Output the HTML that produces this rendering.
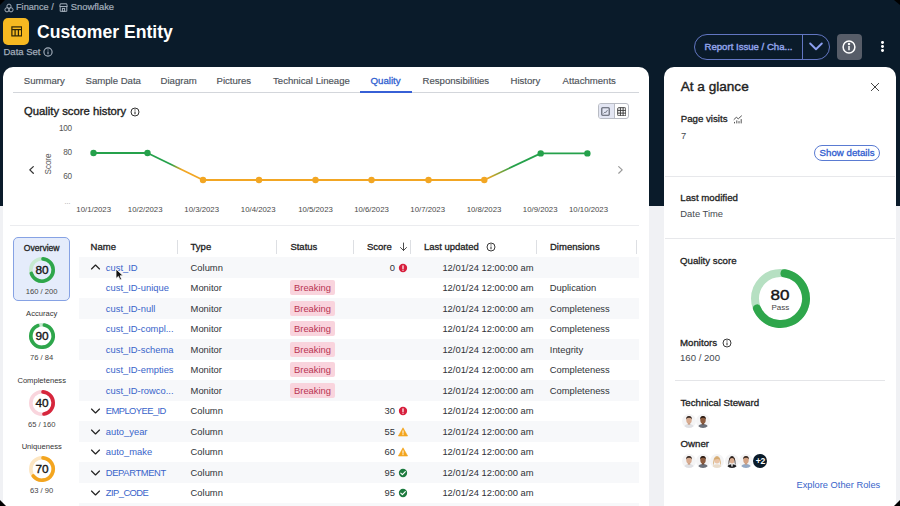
<!DOCTYPE html>
<html><head><meta charset="utf-8">
<style>
*{box-sizing:border-box;margin:0;padding:0}
html,body{width:900px;height:506px;overflow:hidden;background:#f0f1f4;font-family:"Liberation Sans",sans-serif;position:relative}
.t{position:absolute;white-space:nowrap;line-height:20px;height:20px}
.abs{position:absolute}
#hdr{position:absolute;left:0;top:0;width:900px;height:205.6px;background:#0a1b2a}
.card{position:absolute;background:#fff;border-radius:10px 10px 0 0}
.hd{font-size:9.5px;color:#222;-webkit-text-stroke:0.3px #222}
.bd{font-size:9.4px;color:#303338}
.lnk{font-size:9.4px;color:#3864ca}
.lbl{font-size:9.7px;color:#222;-webkit-text-stroke:0.3px #222}
.gry{font-size:9.4px;color:#45494f}
.tab{font-size:9.5px;color:#50555c;top:71px}
</style></head><body>
<div id="hdr"></div>

<!-- breadcrumb -->
<svg class="abs" style="left:3.5px;top:2.5px" width="10" height="10" viewBox="0 0 10 10" fill="none" stroke="#a3aebb" stroke-width="1">
  <circle cx="5" cy="3.2" r="2.1"/><circle cx="3" cy="6.8" r="2.1"/><circle cx="7" cy="6.8" r="2.1"/>
</svg>
<div class="t" style="left:16px;top:-3px;font-size:9.2px;color:#a3aebb;-webkit-text-stroke:0.2px #a3aebb">Finance /</div>
<svg class="abs" style="left:58.5px;top:3px" width="9" height="9" viewBox="0 0 9 9" fill="none" stroke="#a3aebb" stroke-width="1">
  <path d="M1.2 8.3 V3.6 M7.8 3.6 V8.3 H1.2"/><path d="M0.7 3.5 L1.3 0.8 H7.7 L8.3 3.5 Z"/><rect x="3.4" y="5.4" width="2.2" height="2.9"/>
</svg>
<div class="t" style="left:70.8px;top:-3px;font-size:9.4px;color:#a3aebb;-webkit-text-stroke:0.2px #a3aebb">Snowflake</div>

<!-- title -->
<div class="abs" style="left:3.2px;top:18.4px;width:25.8px;height:26.2px;background:#f6b921;border-radius:5px"></div>
<svg class="abs" style="left:10.5px;top:26px" width="11.5" height="11" viewBox="0 0 11.5 11" fill="none" stroke="#2b2408" stroke-width="1.2">
  <rect x="0.9" y="0.9" width="9.7" height="9"/><line x1="0.9" y1="3.6" x2="10.6" y2="3.6"/><line x1="4.1" y1="3.6" x2="4.1" y2="9.9"/><line x1="7.4" y1="3.6" x2="7.4" y2="9.9"/>
</svg>
<div class="t" style="left:37px;top:21.7px;font-size:17.6px;font-weight:700;color:#fff">Customer Entity</div>
<div class="t" style="left:3.5px;top:42px;font-size:9.5px;color:#a3aebb;-webkit-text-stroke:0.25px #a3aebb">Data Set</div>
<svg class="abs" style="left:43px;top:47px" width="10" height="10" viewBox="0 0 10 10" fill="none" stroke="#a3aebb" stroke-width="1.15">
  <circle cx="5" cy="5" r="4.1"/><line x1="5" y1="4.6" x2="5" y2="7.2"/><circle cx="5" cy="2.9" r="0.6" fill="#a3aebb" stroke="none"/>
</svg>

<!-- header right -->
<div class="abs" style="left:694px;top:34px;width:135.5px;height:25.5px;border:1px solid #6276c2;border-radius:13px"></div>
<div class="abs" style="left:802.2px;top:34.5px;width:1px;height:24.5px;background:#6276c2"></div>
<div class="t" style="left:704.5px;top:37px;font-size:9.6px;color:#93a5ec;-webkit-text-stroke:0.4px #93a5ec">Report Issue / Cha...</div>
<svg class="abs" style="left:809px;top:42px" width="14" height="9" viewBox="0 0 14 9" fill="none" stroke="#8c9ff0" stroke-width="1.9" stroke-linecap="round" stroke-linejoin="round">
  <polyline points="1.2,1.5 7,7.2 12.8,1.5"/>
</svg>
<div class="abs" style="left:836.5px;top:34px;width:25.5px;height:26px;background:#575d68;border-radius:4px"></div>
<svg class="abs" style="left:842.3px;top:39.7px" width="14" height="14" viewBox="0 0 14 14" fill="none" stroke="#fff" stroke-width="1.5">
  <circle cx="7" cy="7" r="5.9"/><line x1="7" y1="6" x2="7" y2="10.2"/><circle cx="7" cy="4" r="0.5" fill="#fff"/>
</svg>
<div class="abs" style="left:881.2px;top:41px;width:2.8px;height:2.8px;border-radius:50%;background:#fff"></div>
<div class="abs" style="left:881.2px;top:45.2px;width:2.8px;height:2.8px;border-radius:50%;background:#fff"></div>
<div class="abs" style="left:881.2px;top:49.3px;width:2.8px;height:2.8px;border-radius:50%;background:#fff"></div>

<!-- cards -->
<div class="card" style="left:3px;top:67.2px;width:646px;height:450px"></div>
<div class="card" style="left:664.2px;top:67.2px;width:231.5px;height:450px"></div>


<div class="t " style="left:23.8px;top:71.00px;font-size:9.6px;color:#4d5259;-webkit-text-stroke:0.15px #4d5259">Summary</div>
<div class="t " style="left:85.5px;top:71.00px;font-size:9.6px;color:#4d5259;-webkit-text-stroke:0.15px #4d5259">Sample Data</div>
<div class="t " style="left:160.5px;top:71.00px;font-size:9.6px;color:#4d5259;-webkit-text-stroke:0.15px #4d5259">Diagram</div>
<div class="t " style="left:216.5px;top:71.00px;font-size:9.6px;color:#4d5259;-webkit-text-stroke:0.15px #4d5259">Pictures</div>
<div class="t " style="left:273px;top:71.00px;font-size:9.6px;color:#4d5259;-webkit-text-stroke:0.15px #4d5259">Technical Lineage</div>
<div class="t " style="left:370.5px;top:71.00px;font-size:9.7px;color:#2f5fd0;-webkit-text-stroke:0.3px #2f5fd0">Quality</div>
<div class="t " style="left:422.5px;top:71.00px;font-size:9.6px;color:#4d5259;-webkit-text-stroke:0.15px #4d5259">Responsibilities</div>
<div class="t " style="left:510.5px;top:71.00px;font-size:9.6px;color:#4d5259;-webkit-text-stroke:0.15px #4d5259">History</div>
<div class="t " style="left:562.6px;top:71.00px;font-size:9.6px;color:#4d5259;-webkit-text-stroke:0.15px #4d5259">Attachments</div>
<div class="abs" style="left:13px;top:91.9px;width:626px;height:1px;background:#d3d6db"></div>
<div class="abs" style="left:360.2px;top:90.9px;width:51.8px;height:1.9px;background:#3760d6"></div>
<div class="t " style="left:23.9px;top:101.20px;font-size:11.3px;color:#222;-webkit-text-stroke:0.35px #222">Quality score history</div>
<svg class="abs" style="left:129.5px;top:106.5px" width="10" height="10" viewBox="0 0 10 10" fill="none" stroke="#333" stroke-width="1"><circle cx="5" cy="5" r="4"/><line x1="5" y1="4.5" x2="5" y2="7.3" stroke-width="1.1"/><circle cx="5" cy="2.9" r="0.65" fill="#333" stroke="none"/></svg>
<div class="abs" style="left:597.5px;top:103.3px;width:31.1px;height:15.3px;border:1px solid #b9bcc4;border-radius:3px;background:#fff;overflow:hidden"><div class="abs" style="left:0;top:0;width:15px;height:13.3px;background:#e3e6f3"></div><div class="abs" style="left:15px;top:0;width:1px;height:13.3px;background:#b9bcc4"></div></div>
<svg class="abs" style="left:600.5px;top:106.5px" width="9" height="9" viewBox="0 0 9 9" fill="none" stroke="#555a66" stroke-width="1.1"><rect x="0.8" y="0.8" width="7.4" height="7.4" rx="0.8"/><polyline points="2.5,6.5 4,5 5,5.5 6.5,3" stroke-width="0.7"/></svg>
<svg class="abs" style="left:616.5px;top:106.5px" width="9.5" height="9.5" viewBox="0 0 9.5 9.5" fill="none" stroke="#3a3a3a" stroke-width="0.95"><rect x="0.7" y="0.7" width="8.1" height="8.1" rx="1"/><line x1="0.7" y1="3.4" x2="8.8" y2="3.4"/><line x1="0.7" y1="6.1" x2="8.8" y2="6.1"/><line x1="3.4" y1="0.7" x2="3.4" y2="8.8"/><line x1="6.1" y1="0.7" x2="6.1" y2="8.8"/></svg>
<div class="t " style="right:828.20px;top:118.90px;text-align:right;font-size:8.2px;color:#555;letter-spacing:-0.3px">100</div>
<div class="t " style="right:828.20px;top:143.00px;text-align:right;font-size:8.2px;color:#555;letter-spacing:-0.3px">80</div>
<div class="t " style="right:828.20px;top:167.30px;text-align:right;font-size:8.2px;color:#555;letter-spacing:-0.3px">60</div>
<div class="t " style="left:64.5px;top:191.50px;font-size:7px;color:#999">...</div>
<div class="t" style="left:29.2px;top:154px;font-size:8.2px;color:#555;letter-spacing:-0.1px;transform:rotate(-90deg);transform-origin:20px 10px;width:40px;text-align:center">Score</div>
<svg class="abs" style="left:27px;top:164px" width="9" height="12" viewBox="0 0 9 12" fill="none" stroke="#333" stroke-width="1.3" stroke-linecap="round" stroke-linejoin="round"><polyline points="6.3,2.6 2.8,5.9 6.3,9.2"/></svg>
<svg class="abs" style="left:616px;top:164px" width="9" height="12" viewBox="0 0 9 12" fill="none" stroke="#999" stroke-width="1.2" stroke-linecap="round" stroke-linejoin="round"><polyline points="2.7,2.6 6.2,5.9 2.7,9.2"/></svg>
<svg class="abs" style="left:0;top:0" width="650" height="230" viewBox="0 0 650 230"><defs><linearGradient id="g1" gradientUnits="userSpaceOnUse" x1="147.5" y1="153" x2="203" y2="180"><stop offset="0.42" stop-color="#25a14b"/><stop offset="0.62" stop-color="#f2a623"/></linearGradient><linearGradient id="g2" gradientUnits="userSpaceOnUse" x1="484.3" y1="180" x2="540.7" y2="153.4"><stop offset="0.05" stop-color="#f2a623"/><stop offset="0.5" stop-color="#25a14b"/></linearGradient></defs><line x1="93.5" y1="153" x2="147.5" y2="153" stroke="#25a14b" stroke-width="1.8"/><line x1="147.5" y1="153" x2="203" y2="180" stroke="url(#g1)" stroke-width="1.8"/><line x1="203" y1="180" x2="259" y2="180" stroke="#f2a623" stroke-width="1.8"/><line x1="259" y1="180" x2="315.5" y2="180" stroke="#f2a623" stroke-width="1.8"/><line x1="315.5" y1="180" x2="371.5" y2="180" stroke="#f2a623" stroke-width="1.8"/><line x1="371.5" y1="180" x2="428.5" y2="180" stroke="#f2a623" stroke-width="1.8"/><line x1="428.5" y1="180" x2="484.3" y2="180" stroke="#f2a623" stroke-width="1.8"/><line x1="484.3" y1="180" x2="540.7" y2="153.4" stroke="url(#g2)" stroke-width="1.8"/><line x1="540.7" y1="153.4" x2="587.4" y2="153.4" stroke="#25a14b" stroke-width="1.8"/><circle cx="93.5" cy="153" r="3.2" fill="#25a14b"/><circle cx="147.5" cy="153" r="3.2" fill="#25a14b"/><circle cx="203" cy="180" r="3.2" fill="#f2a623"/><circle cx="259" cy="180" r="3.2" fill="#f2a623"/><circle cx="315.5" cy="180" r="3.2" fill="#f2a623"/><circle cx="371.5" cy="180" r="3.2" fill="#f2a623"/><circle cx="428.5" cy="180" r="3.2" fill="#f2a623"/><circle cx="484.3" cy="180" r="3.2" fill="#f2a623"/><circle cx="540.7" cy="153.4" r="3.2" fill="#25a14b"/><circle cx="587.4" cy="153.4" r="3.2" fill="#25a14b"/></svg>
<div class="t " style="left:53.70px;top:199.80px;width:80px;text-align:center;font-size:7.8px;color:#4a4a4a">10/1/2023</div>
<div class="t " style="left:105.20px;top:199.80px;width:80px;text-align:center;font-size:7.8px;color:#4a4a4a">10/2/2023</div>
<div class="t " style="left:161.70px;top:199.80px;width:80px;text-align:center;font-size:7.8px;color:#4a4a4a">10/3/2023</div>
<div class="t " style="left:218.20px;top:199.80px;width:80px;text-align:center;font-size:7.8px;color:#4a4a4a">10/4/2023</div>
<div class="t " style="left:275.50px;top:199.80px;width:80px;text-align:center;font-size:7.8px;color:#4a4a4a">10/5/2023</div>
<div class="t " style="left:331.50px;top:199.80px;width:80px;text-align:center;font-size:7.8px;color:#4a4a4a">10/6/2023</div>
<div class="t " style="left:387.70px;top:199.80px;width:80px;text-align:center;font-size:7.8px;color:#4a4a4a">10/7/2023</div>
<div class="t " style="left:444.00px;top:199.80px;width:80px;text-align:center;font-size:7.8px;color:#4a4a4a">10/8/2023</div>
<div class="t " style="left:500.20px;top:199.80px;width:80px;text-align:center;font-size:7.8px;color:#4a4a4a">10/9/2023</div>
<div class="t " style="left:548.50px;top:199.80px;width:80px;text-align:center;font-size:7.8px;color:#4a4a4a">10/10/2023</div>
<div class="abs" style="left:10px;top:225.2px;width:629px;height:1px;background:#ebecef"></div>
<div class="abs" style="left:13.4px;top:236.5px;width:56.6px;height:64.1px;background:#e5ecfb;border:1.3px solid #86a2e4;border-radius:5px"></div>
<div class="t " style="left:1.70px;top:237.80px;width:80px;text-align:center;font-size:8.6px;color:#222;-webkit-text-stroke:0.3px #222">Overview</div>
<svg class="abs" style="left:27.00px;top:254.60px" width="30" height="30" viewBox="0 0 30 30"><circle cx="15.0" cy="15.0" r="11.200" fill="none" stroke="#c7e9d0" stroke-width="3.6"/><path d="M15.976 3.843 A11.200 11.200 0 1 1 4.348 18.461" fill="none" stroke="#2ea64b" stroke-width="3.6" stroke-linecap="round"/></svg>
<div class="t " style="left:2.20px;top:259.60px;width:80px;text-align:center;font-size:11px;color:#161616;-webkit-text-stroke:0.35px #161616;transform:scaleX(1.08)">80</div>
<div class="t " style="left:1.70px;top:281.60px;width:80px;text-align:center;font-size:7.6px;color:#444">160 / 200</div>
<div class="t " style="left:1.70px;top:304.20px;width:80px;text-align:center;font-size:7.6px;color:#333">Accuracy</div>
<svg class="abs" style="left:27.00px;top:321.20px" width="30" height="30" viewBox="0 0 30 30"><circle cx="15.0" cy="15.0" r="11.200" fill="none" stroke="#c7e9d0" stroke-width="3.6"/><path d="M17.329 4.045 A11.200 11.200 0 1 1 10.804 4.616" fill="none" stroke="#2ea64b" stroke-width="3.6" stroke-linecap="round"/></svg>
<div class="t " style="left:2.20px;top:326.20px;width:80px;text-align:center;font-size:11px;color:#161616;-webkit-text-stroke:0.35px #161616;transform:scaleX(1.08)">90</div>
<div class="t " style="left:1.70px;top:348.20px;width:80px;text-align:center;font-size:7.6px;color:#444">76 / 84</div>
<div class="t " style="left:1.70px;top:370.80px;width:80px;text-align:center;font-size:7.6px;color:#333">Completeness</div>
<svg class="abs" style="left:27.00px;top:387.80px" width="30" height="30" viewBox="0 0 30 30"><circle cx="15.0" cy="15.0" r="11.200" fill="none" stroke="#f9d5dd" stroke-width="3.6"/><path d="M15.976 3.843 A11.200 11.200 0 0 1 16.945 26.030" fill="none" stroke="#d6263c" stroke-width="3.6" stroke-linecap="round"/></svg>
<div class="t " style="left:2.20px;top:392.80px;width:80px;text-align:center;font-size:11px;color:#161616;-webkit-text-stroke:0.35px #161616;transform:scaleX(1.08)">40</div>
<div class="t " style="left:1.70px;top:414.80px;width:80px;text-align:center;font-size:7.6px;color:#444">65 / 160</div>
<div class="t " style="left:1.70px;top:437.40px;width:80px;text-align:center;font-size:7.6px;color:#333">Uniqueness</div>
<svg class="abs" style="left:27.00px;top:454.40px" width="30" height="30" viewBox="0 0 30 30"><circle cx="15.0" cy="15.0" r="11.200" fill="none" stroke="#fde6c2" stroke-width="3.6"/><path d="M15.976 3.843 A11.200 11.200 0 1 1 6.174 21.895" fill="none" stroke="#f3a51f" stroke-width="3.6" stroke-linecap="round"/></svg>
<div class="t " style="left:2.20px;top:459.40px;width:80px;text-align:center;font-size:11px;color:#161616;-webkit-text-stroke:0.35px #161616;transform:scaleX(1.08)">70</div>
<div class="t " style="left:1.70px;top:481.40px;width:80px;text-align:center;font-size:7.6px;color:#444">63 / 90</div>
<div class="t hd" style="left:90.6px;top:236.80px;">Name</div>
<div class="t hd" style="left:190.6px;top:236.80px;">Type</div>
<div class="t hd" style="left:290.4px;top:236.80px;">Status</div>
<div class="t hd" style="left:367px;top:236.80px;">Score</div>
<div class="t hd" style="left:423.9px;top:236.80px;">Last updated</div>
<div class="t hd" style="left:550px;top:236.80px;">Dimensions</div>
<div class="abs" style="left:177.1px;top:240px;width:1px;height:14px;background:#dddfe3"></div>
<div class="abs" style="left:276.0px;top:240px;width:1px;height:14px;background:#dddfe3"></div>
<div class="abs" style="left:353.0px;top:240px;width:1px;height:14px;background:#dddfe3"></div>
<div class="abs" style="left:409.9px;top:240px;width:1px;height:14px;background:#dddfe3"></div>
<div class="abs" style="left:536.1px;top:240px;width:1px;height:14px;background:#dddfe3"></div>
<div class="abs" style="left:635.8px;top:240px;width:1px;height:14px;background:#dddfe3"></div>
<svg class="abs" style="left:398.5px;top:241.5px" width="9" height="10" viewBox="0 0 9 10" fill="none" stroke="#444" stroke-width="0.95" stroke-linecap="round" stroke-linejoin="round"><line x1="4.5" y1="1" x2="4.5" y2="8.5"/><polyline points="1.5,5.5 4.5,8.5 7.5,5.5"/></svg>
<svg class="abs" style="left:485.6px;top:241.8px" width="10" height="10" viewBox="0 0 10 10" fill="none" stroke="#3a3a3a" stroke-width="1"><circle cx="5" cy="5" r="4"/><line x1="5" y1="4.5" x2="5" y2="7.3" stroke-width="1.1"/><circle cx="5" cy="2.9" r="0.65" fill="#3a3a3a" stroke="none"/></svg>
<div class="abs" style="left:79.4px;top:257.0px;width:559.3px;height:20.5px;background:#f7f8fa"></div>
<svg class="abs" style="left:90px;top:263.0px" width="11" height="8" viewBox="0 0 11 8" fill="none" stroke="#222" stroke-width="1.15" stroke-linecap="round" stroke-linejoin="round"><polyline points="1.5,6 5.5,2 9.5,6"/></svg>
<div class="t lnk" style="left:105.8px;top:257.50px;letter-spacing:0px">cust_ID</div>
<div class="t bd" style="left:190.6px;top:257.50px;">Column</div>
<div class="t bd" style="right:505.00px;top:257.50px;text-align:right;">0</div>
<svg class="abs" style="left:397.7px;top:262.5px" width="10" height="10" viewBox="0 0 10 10"><circle cx="5" cy="5" r="4.15" fill="#d71f3d"/><line x1="5" y1="2.8" x2="5" y2="5.5" stroke="#fff" stroke-width="1.2" stroke-linecap="round"/><circle cx="5" cy="7.2" r="0.65" fill="#fff"/></svg>
<div class="t bd" style="left:442.4px;top:257.50px;">12/01/24 12:00:00 am</div>
<div class="t lnk" style="left:105.8px;top:278.00px;letter-spacing:0px">cust_ID-unique</div>
<div class="t bd" style="left:190.6px;top:278.00px;">Monitor</div>
<div class="abs" style="left:290px;top:280.0px;width:44.6px;height:15px;background:#f9d4dd;border-radius:2px"></div>
<div class="t " style="left:294px;top:278.00px;font-size:9.4px;color:#b83553">Breaking</div>
<div class="t bd" style="left:442.4px;top:278.00px;">12/01/24 12:00:00 am</div>
<div class="t bd" style="left:549.8px;top:278.00px;">Duplication</div>
<div class="abs" style="left:79.4px;top:298.0px;width:559.3px;height:20.5px;background:#f7f8fa"></div>
<div class="t lnk" style="left:105.8px;top:298.50px;letter-spacing:0px">cust_ID-null</div>
<div class="t bd" style="left:190.6px;top:298.50px;">Monitor</div>
<div class="abs" style="left:290px;top:300.5px;width:44.6px;height:15px;background:#f9d4dd;border-radius:2px"></div>
<div class="t " style="left:294px;top:298.50px;font-size:9.4px;color:#b83553">Breaking</div>
<div class="t bd" style="left:442.4px;top:298.50px;">12/01/24 12:00:00 am</div>
<div class="t bd" style="left:549.8px;top:298.50px;">Completeness</div>
<div class="t lnk" style="left:105.8px;top:319.00px;letter-spacing:0px">cust_ID-compl...</div>
<div class="t bd" style="left:190.6px;top:319.00px;">Monitor</div>
<div class="abs" style="left:290px;top:321.0px;width:44.6px;height:15px;background:#f9d4dd;border-radius:2px"></div>
<div class="t " style="left:294px;top:319.00px;font-size:9.4px;color:#b83553">Breaking</div>
<div class="t bd" style="left:442.4px;top:319.00px;">12/01/24 12:00:00 am</div>
<div class="t bd" style="left:549.8px;top:319.00px;">Completeness</div>
<div class="abs" style="left:79.4px;top:339.0px;width:559.3px;height:20.5px;background:#f7f8fa"></div>
<div class="t lnk" style="left:105.8px;top:339.50px;letter-spacing:0px">cust_ID-schema</div>
<div class="t bd" style="left:190.6px;top:339.50px;">Monitor</div>
<div class="abs" style="left:290px;top:341.5px;width:44.6px;height:15px;background:#f9d4dd;border-radius:2px"></div>
<div class="t " style="left:294px;top:339.50px;font-size:9.4px;color:#b83553">Breaking</div>
<div class="t bd" style="left:442.4px;top:339.50px;">12/01/24 12:00:00 am</div>
<div class="t bd" style="left:549.8px;top:339.50px;">Integrity</div>
<div class="t lnk" style="left:105.8px;top:360.00px;letter-spacing:0px">cust_ID-empties</div>
<div class="t bd" style="left:190.6px;top:360.00px;">Monitor</div>
<div class="abs" style="left:290px;top:362.0px;width:44.6px;height:15px;background:#f9d4dd;border-radius:2px"></div>
<div class="t " style="left:294px;top:360.00px;font-size:9.4px;color:#b83553">Breaking</div>
<div class="t bd" style="left:442.4px;top:360.00px;">12/01/24 12:00:00 am</div>
<div class="t bd" style="left:549.8px;top:360.00px;">Completeness</div>
<div class="abs" style="left:79.4px;top:380.0px;width:559.3px;height:20.5px;background:#f7f8fa"></div>
<div class="t lnk" style="left:105.8px;top:380.50px;letter-spacing:0px">cust_ID-rowco...</div>
<div class="t bd" style="left:190.6px;top:380.50px;">Monitor</div>
<div class="abs" style="left:290px;top:382.5px;width:44.6px;height:15px;background:#f9d4dd;border-radius:2px"></div>
<div class="t " style="left:294px;top:380.50px;font-size:9.4px;color:#b83553">Breaking</div>
<div class="t bd" style="left:442.4px;top:380.50px;">12/01/24 12:00:00 am</div>
<div class="t bd" style="left:549.8px;top:380.50px;">Completeness</div>
<svg class="abs" style="left:90px;top:407.0px" width="11" height="8" viewBox="0 0 11 8" fill="none" stroke="#222" stroke-width="1.15" stroke-linecap="round" stroke-linejoin="round"><polyline points="1.5,2 5.5,6 9.5,2"/></svg>
<div class="t lnk" style="left:105.8px;top:401.00px;letter-spacing:-0.56px">EMPLOYEE_ID</div>
<div class="t bd" style="left:190.6px;top:401.00px;">Column</div>
<div class="t bd" style="right:505.00px;top:401.00px;text-align:right;">30</div>
<svg class="abs" style="left:397.7px;top:406.0px" width="10" height="10" viewBox="0 0 10 10"><circle cx="5" cy="5" r="4.15" fill="#d71f3d"/><line x1="5" y1="2.8" x2="5" y2="5.5" stroke="#fff" stroke-width="1.2" stroke-linecap="round"/><circle cx="5" cy="7.2" r="0.65" fill="#fff"/></svg>
<div class="t bd" style="left:442.4px;top:401.00px;">12/01/24 12:00:00 am</div>
<div class="abs" style="left:79.4px;top:421.0px;width:559.3px;height:20.5px;background:#f7f8fa"></div>
<svg class="abs" style="left:90px;top:427.5px" width="11" height="8" viewBox="0 0 11 8" fill="none" stroke="#222" stroke-width="1.15" stroke-linecap="round" stroke-linejoin="round"><polyline points="1.5,2 5.5,6 9.5,2"/></svg>
<div class="t lnk" style="left:105.8px;top:421.50px;letter-spacing:0px">auto_year</div>
<div class="t bd" style="left:190.6px;top:421.50px;">Column</div>
<div class="t bd" style="right:505.00px;top:421.50px;text-align:right;">55</div>
<svg class="abs" style="left:397.7px;top:426.5px" width="10" height="10" viewBox="0 0 10 10"><path d="M5 0.8 L9.6 9 L0.4 9 Z" fill="#f3a51f" stroke="#f3a51f" stroke-width="0.6" stroke-linejoin="round"/><line x1="5" y1="3.8" x2="5" y2="6.3" stroke="#fff" stroke-width="1" stroke-linecap="round"/><circle cx="5" cy="7.6" r="0.55" fill="#fff"/></svg>
<div class="t bd" style="left:442.4px;top:421.50px;">12/01/24 12:00:00 am</div>
<svg class="abs" style="left:90px;top:448.0px" width="11" height="8" viewBox="0 0 11 8" fill="none" stroke="#222" stroke-width="1.15" stroke-linecap="round" stroke-linejoin="round"><polyline points="1.5,2 5.5,6 9.5,2"/></svg>
<div class="t lnk" style="left:105.8px;top:442.00px;letter-spacing:0px">auto_make</div>
<div class="t bd" style="left:190.6px;top:442.00px;">Column</div>
<div class="t bd" style="right:505.00px;top:442.00px;text-align:right;">60</div>
<svg class="abs" style="left:397.7px;top:447.0px" width="10" height="10" viewBox="0 0 10 10"><path d="M5 0.8 L9.6 9 L0.4 9 Z" fill="#f3a51f" stroke="#f3a51f" stroke-width="0.6" stroke-linejoin="round"/><line x1="5" y1="3.8" x2="5" y2="6.3" stroke="#fff" stroke-width="1" stroke-linecap="round"/><circle cx="5" cy="7.6" r="0.55" fill="#fff"/></svg>
<div class="t bd" style="left:442.4px;top:442.00px;">12/01/24 12:00:00 am</div>
<div class="abs" style="left:79.4px;top:462.0px;width:559.3px;height:20.5px;background:#f7f8fa"></div>
<svg class="abs" style="left:90px;top:468.5px" width="11" height="8" viewBox="0 0 11 8" fill="none" stroke="#222" stroke-width="1.15" stroke-linecap="round" stroke-linejoin="round"><polyline points="1.5,2 5.5,6 9.5,2"/></svg>
<div class="t lnk" style="left:105.8px;top:462.50px;letter-spacing:-0.37px">DEPARTMENT</div>
<div class="t bd" style="left:190.6px;top:462.50px;">Column</div>
<div class="t bd" style="right:505.00px;top:462.50px;text-align:right;">95</div>
<svg class="abs" style="left:397.7px;top:467.5px" width="10" height="10" viewBox="0 0 10 10"><circle cx="5" cy="5" r="4.15" fill="#1d7a3e"/><polyline points="2.8,5.1 4.4,6.6 7.3,3.7" fill="none" stroke="#fff" stroke-width="1.2" stroke-linecap="round" stroke-linejoin="round"/></svg>
<div class="t bd" style="left:442.4px;top:462.50px;">12/01/24 12:00:00 am</div>
<svg class="abs" style="left:90px;top:489.0px" width="11" height="8" viewBox="0 0 11 8" fill="none" stroke="#222" stroke-width="1.15" stroke-linecap="round" stroke-linejoin="round"><polyline points="1.5,2 5.5,6 9.5,2"/></svg>
<div class="t lnk" style="left:105.8px;top:483.00px;letter-spacing:-0.55px">ZIP_CODE</div>
<div class="t bd" style="left:190.6px;top:483.00px;">Column</div>
<div class="t bd" style="right:505.00px;top:483.00px;text-align:right;">95</div>
<svg class="abs" style="left:397.7px;top:488.0px" width="10" height="10" viewBox="0 0 10 10"><circle cx="5" cy="5" r="4.15" fill="#1d7a3e"/><polyline points="2.8,5.1 4.4,6.6 7.3,3.7" fill="none" stroke="#fff" stroke-width="1.2" stroke-linecap="round" stroke-linejoin="round"/></svg>
<div class="t bd" style="left:442.4px;top:483.00px;">12/01/24 12:00:00 am</div>
<div class="abs" style="left:79.4px;top:503px;width:559.3px;height:20.5px;background:#f7f8fa"></div>
<svg class="abs" style="left:115px;top:268px" width="9" height="13" viewBox="0 0 9 13"><path d="M1 1 L1 10.5 L3.4 8.4 L5 12 L6.6 11.3 L5.1 7.8 L8.2 7.8 Z" fill="#111" stroke="#fff" stroke-width="0.8" stroke-linejoin="round"/></svg>
<div class="t " style="left:680.7px;top:76.70px;font-size:13.6px;color:#222;-webkit-text-stroke:0.4px #222">At a glance</div>
<svg class="abs" style="left:870px;top:81.7px" width="10" height="10" viewBox="0 0 10 10" stroke="#444" stroke-width="1" stroke-linecap="round"><line x1="1.3" y1="1.3" x2="8.7" y2="8.7"/><line x1="8.7" y1="1.3" x2="1.3" y2="8.7"/></svg>
<div class="t lbl" style="left:680.7px;top:109.00px;">Page visits</div>
<svg class="abs" style="left:733px;top:114.5px" width="10" height="9" viewBox="0 0 10 9" fill="none" stroke="#555" stroke-width="1" stroke-linecap="round" stroke-linejoin="round"><polyline points="1,4.5 3.3,2.3 5.3,3.8 8.5,0.9"/><line x1="1.5" y1="8" x2="1.5" y2="7.3"/><line x1="3.8" y1="8" x2="3.8" y2="5.8"/><line x1="6" y1="8" x2="6" y2="6.5"/><line x1="8.2" y1="8" x2="8.2" y2="4.5"/></svg>
<div class="t gry" style="left:681px;top:126.00px;">7</div>
<div class="abs" style="left:814px;top:145px;width:66.2px;height:15.7px;border:1px solid #5a7bd2;border-radius:8px"></div>
<div class="t " style="left:819.6px;top:142.80px;font-size:9.7px;color:#2f5ccf;-webkit-text-stroke:0.3px #2f5ccf">Show details</div>
<div class="abs" style="left:665px;top:175.5px;width:230px;height:1px;background:#e7e8eb"></div>
<div class="t lbl" style="left:680.3px;top:188.20px;">Last modified</div>
<div class="t gry" style="left:680.3px;top:204.40px;">Date Time</div>
<div class="abs" style="left:665px;top:238.2px;width:230px;height:1px;background:#e7e8eb"></div>
<div class="t lbl" style="left:680px;top:251.30px;">Quality score</div>
<svg class="abs" style="left:748.90px;top:267.40px" width="63" height="63" viewBox="0 0 63 63"><circle cx="31.5" cy="31.5" r="25.500" fill="none" stroke="#b6e0c2" stroke-width="8"/><path d="M35.489 6.314 A25.500 25.500 0 1 1 8.027 41.464" fill="none" stroke="#2ea64b" stroke-width="8" stroke-linecap="round"/></svg>
<div class="t " style="left:740.40px;top:284.80px;width:80px;text-align:center;font-size:14.2px;color:#161616;-webkit-text-stroke:0.4px #161616;transform:scaleX(1.2)">80</div>
<div class="t " style="left:740.30px;top:298.10px;width:80px;text-align:center;font-size:8px;color:#444">Pass</div>
<div class="t lbl" style="left:680px;top:332.50px;">Monitors</div>
<svg class="abs" style="left:721.7px;top:337.5px" width="10" height="10" viewBox="0 0 10 10" fill="none" stroke="#3a3a3a" stroke-width="1"><circle cx="5" cy="5" r="4"/><line x1="5" y1="4.5" x2="5" y2="7.3" stroke-width="1.1"/><circle cx="5" cy="2.9" r="0.65" fill="#3a3a3a" stroke="none"/></svg>
<div class="t " style="left:680px;top:347.60px;font-size:9.6px;color:#45494f">160 / 200</div>
<div class="abs" style="left:675px;top:379.5px;width:210px;height:1px;background:#e4e5e8"></div>
<div class="t lbl" style="left:680.5px;top:392.70px;">Technical Steward</div>
<div class="t lbl" style="left:680.5px;top:433.50px;">Owner</div>
<svg class="abs" style="left:681.70px;top:413.50px" width="14" height="14" viewBox="0 0 14 14"><defs><clipPath id="av6887_4205"><circle cx="7.0" cy="7.0" r="7.0"/></clipPath></defs><circle cx="7.0" cy="7.0" r="7.0" fill="#f4f4f5"/><g clip-path="url(#av6887_4205)"><path d="M1.6 14.5 Q2 10.4 7 10.1 Q12 10.4 12.4 14.5 Z" fill="#dfe0e4"/><rect x="5.8" y="8.6" width="2.4" height="2" fill="#c49a80"/><ellipse cx="7" cy="6.1" rx="2.75" ry="3.5" fill="#d8ab90"/><path d="M4.1 5.6 Q3.9 2 7 2.1 Q10.1 2 9.9 5.6 Q9.5 3.6 7 3.7 Q4.5 3.6 4.1 5.6 Z" fill="#3b2c25"/></g></svg>
<svg class="abs" style="left:696.00px;top:413.50px" width="14" height="14" viewBox="0 0 14 14"><defs><clipPath id="av7030_4205"><circle cx="7.0" cy="7.0" r="7.0"/></clipPath></defs><circle cx="7.0" cy="7.0" r="7.0" fill="#f4f4f5"/><g clip-path="url(#av7030_4205)"><path d="M1.6 14.5 Q2 10.4 7 10.1 Q12 10.4 12.4 14.5 Z" fill="#6a6f79"/><rect x="5.8" y="8.6" width="2.4" height="2" fill="#6e4a36"/><ellipse cx="7" cy="6.1" rx="2.75" ry="3.5" fill="#8d5c3f"/><path d="M4.1 5.6 Q3.9 2 7 2.1 Q10.1 2 9.9 5.6 Q9.5 3.6 7 3.7 Q4.5 3.6 4.1 5.6 Z" fill="#2a1a12"/></g></svg>
<svg class="abs" style="left:681.70px;top:454.20px" width="14" height="14" viewBox="0 0 14 14"><defs><clipPath id="av6887_4612"><circle cx="7.0" cy="7.0" r="7.0"/></clipPath></defs><circle cx="7.0" cy="7.0" r="7.0" fill="#f4f4f5"/><g clip-path="url(#av6887_4612)"><path d="M1.6 14.5 Q2 10.4 7 10.1 Q12 10.4 12.4 14.5 Z" fill="#dfe0e4"/><rect x="5.8" y="8.6" width="2.4" height="2" fill="#c49a80"/><ellipse cx="7" cy="6.1" rx="2.75" ry="3.5" fill="#d8ab90"/><path d="M4.1 5.6 Q3.9 2 7 2.1 Q10.1 2 9.9 5.6 Q9.5 3.6 7 3.7 Q4.5 3.6 4.1 5.6 Z" fill="#3b2c25"/></g></svg>
<svg class="abs" style="left:696.00px;top:454.20px" width="14" height="14" viewBox="0 0 14 14"><defs><clipPath id="av7030_4612"><circle cx="7.0" cy="7.0" r="7.0"/></clipPath></defs><circle cx="7.0" cy="7.0" r="7.0" fill="#f4f4f5"/><g clip-path="url(#av7030_4612)"><path d="M1.6 14.5 Q2 10.4 7 10.1 Q12 10.4 12.4 14.5 Z" fill="#6a6f79"/><rect x="5.8" y="8.6" width="2.4" height="2" fill="#6e4a36"/><ellipse cx="7" cy="6.1" rx="2.75" ry="3.5" fill="#8d5c3f"/><path d="M4.1 5.6 Q3.9 2 7 2.1 Q10.1 2 9.9 5.6 Q9.5 3.6 7 3.7 Q4.5 3.6 4.1 5.6 Z" fill="#2a1a12"/></g></svg>
<svg class="abs" style="left:710.40px;top:454.20px" width="14" height="14" viewBox="0 0 14 14"><defs><clipPath id="av7174_4612"><circle cx="7.0" cy="7.0" r="7.0"/></clipPath></defs><circle cx="7.0" cy="7.0" r="7.0" fill="#f4f4f5"/><g clip-path="url(#av7174_4612)"><path d="M1.8 14.5 Q2.3 10.6 7 10.3 Q11.7 10.6 12.2 14.5 Z" fill="#e9dccb"/><path d="M3.2 11.8 Q2.8 2.2 7 2 Q11.2 2.2 10.8 11.8 Q9.8 9.5 9.4 6.5 L4.6 6.5 Q4.2 9.5 3.2 11.8 Z" fill="#d8b07a"/><ellipse cx="7" cy="6.3" rx="2.5" ry="3.3" fill="#eac4a6"/><path d="M4.3 5.8 Q4.6 2.9 7 3 Q9.4 2.9 9.7 5.8 Q8.2 4 4.3 5.8 Z" fill="#d4aa70"/></g></svg>
<svg class="abs" style="left:724.70px;top:454.20px" width="14" height="14" viewBox="0 0 14 14"><defs><clipPath id="av7317_4612"><circle cx="7.0" cy="7.0" r="7.0"/></clipPath></defs><circle cx="7.0" cy="7.0" r="7.0" fill="#f4f4f5"/><g clip-path="url(#av7317_4612)"><path d="M1.6 14.5 Q2 10.5 7 10.2 Q12 10.5 12.4 14.5 Z" fill="#1b1b1d"/><path d="M5.9 10.3 L7 13.5 L8.1 10.3 Z" fill="#f2f2f2"/><path d="M3.5 11.5 Q3.1 2.2 7 2.1 Q10.9 2.2 10.5 11.5 Q9.6 9.4 9.4 6.5 L4.6 6.5 Q4.4 9.4 3.5 11.5 Z" fill="#1c1412"/><ellipse cx="7" cy="6.3" rx="2.4" ry="3.3" fill="#dcae90"/><path d="M4.5 6 Q4.7 3 7 3.1 Q9.3 3 9.5 6 Q8.9 4 7 4.1 Q5.1 4 4.5 6 Z" fill="#1c1412"/></g></svg>
<svg class="abs" style="left:739.00px;top:454.20px" width="14" height="14" viewBox="0 0 14 14"><defs><clipPath id="av7460_4612"><circle cx="7.0" cy="7.0" r="7.0"/></clipPath></defs><circle cx="7.0" cy="7.0" r="7.0" fill="#f4f4f5"/><g clip-path="url(#av7460_4612)"><path d="M1.6 14.5 Q2 10.4 7 10.1 Q12 10.4 12.4 14.5 Z" fill="#93a8c4"/><rect x="5.8" y="8.6" width="2.4" height="2" fill="#c49a80"/><ellipse cx="7" cy="6.1" rx="2.75" ry="3.5" fill="#d3a283"/><path d="M4.1 5.6 Q3.9 2 7 2.1 Q10.1 2 9.9 5.6 Q9.5 3.6 7 3.7 Q4.5 3.6 4.1 5.6 Z" fill="#3d2c22"/></g></svg>
<div class="abs" style="left:753.4px;top:454.3px;width:13.8px;height:13.8px;border-radius:50%;background:#0a1b2a"></div>
<div class="t " style="left:720.30px;top:451.20px;width:80px;text-align:center;font-size:8.6px;font-weight:700;color:#fff;letter-spacing:-0.4px">+2</div>
<div class="t " style="left:796.5px;top:474.50px;font-size:9.3px;color:#3864ca">Explore Other Roles</div>
<svg class="abs" style="left:0;top:0" width="6" height="6"><path d="M0 0 L5 0 L0 5 Z" fill="#000"/></svg>
<svg class="abs" style="left:894px;top:0" width="6" height="6"><path d="M0 0 L6 0 L6 5 Z" fill="#000"/></svg>
<svg class="abs" style="left:0;top:500px" width="6" height="6"><path d="M0 0 L6 6 L0 6 Z" fill="#000"/></svg>
<svg class="abs" style="left:894px;top:500px" width="6" height="6"><path d="M6 0 L6 6 L0 6 Z" fill="#000"/></svg>
</body></html>
